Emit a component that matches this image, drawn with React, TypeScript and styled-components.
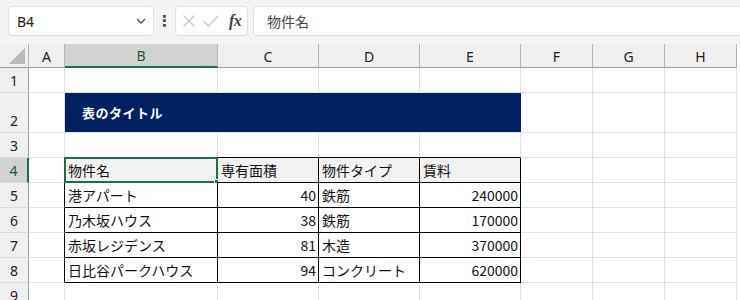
import { FC } from "react";
import styled, { createGlobalStyle } from "styled-components";

const GlobalStyle = createGlobalStyle`
    html, body {
        margin: 0;
        padding: 0;
        background: #ffffff;
        overflow: hidden;
    }
    * {
        box-sizing: border-box;
    }
`;

const GRID = "#e1e1e1";
const HEAD_LINE = "#b4b4b4";
const BLACK = "#000000";
const GREEN = "#1e6f45";
const NAVY = "#002060";

const columns = ["A", "B", "C", "D", "E", "F", "G", "H"];
const colWidths = [29, 36, 153, 101, 101, 101, 72, 72, 72];
const rowHeights = [24, 25, 40, 25, 25, 25, 25, 25, 25, 25];

type Row = { name: string; area: number; kind: string; rent: number };

const rows: Row[] = [
    { name: "港アパート", area: 40, kind: "鉄筋", rent: 240000 },
    { name: "乃木坂ハウス", area: 38, kind: "鉄筋", rent: 170000 },
    { name: "赤坂レジデンス", area: 81, kind: "木造", rent: 370000 },
    { name: "日比谷パークハウス", area: 94, kind: "コンクリート", rent: 620000 }
];

const ChevronDown: FC = () => (
    <svg width="12" height="12" viewBox="0 0 12 12" fill="none">
        <path d="M2.5 4.5 L6 8 L9.5 4.5" stroke="#444" strokeWidth="1.2" strokeLinecap="round" strokeLinejoin="round" />
    </svg>
);

const CrossIcon: FC = () => (
    <svg width="14" height="14" viewBox="0 0 14 14" fill="none">
        <path d="M1.5 1.5 L12.5 12.5 M12.5 1.5 L1.5 12.5" stroke="#c4c4c4" strokeWidth="1.1" />
    </svg>
);

const CheckIcon: FC = () => (
    <svg width="16" height="14" viewBox="0 0 16 14" fill="none">
        <path d="M1 7.5 L5.5 12 L15 2" stroke="#c4c4c4" strokeWidth="1.1" />
    </svg>
);

const DataRow: FC<{ row: Row; rowNo: number }> = ({ row, rowNo }) => (
    <>
        <RowHead>{rowNo}</RowHead>
        <Cell $right={BLACK} />
        <Cell $right={BLACK} $bottom={BLACK}>{row.name}</Cell>
        <Cell $right={BLACK} $bottom={BLACK} $align="right">{row.area}</Cell>
        <Cell $right={BLACK} $bottom={BLACK}>{row.kind}</Cell>
        <Cell $right={BLACK} $bottom={BLACK} $align="right">{row.rent}</Cell>
        <Cell />
        <Cell />
        <Cell />
    </>
);

export default function App() {
    return (
        <>
            <GlobalStyle />
            <Window>
                <FormulaBar>
                    <NameBox>
                        <span>B4</span>
                        <ChevronDown />
                    </NameBox>
                    <Dots>⋮</Dots>
                    <FxBox>
                        <CrossIcon />
                        <CheckIcon />
                        <FxLabel>fx</FxLabel>
                    </FxBox>
                    <FormulaInput>物件名</FormulaInput>
                </FormulaBar>

                <Sheet>
                    <Corner>
                        <CornerTriangle />
                    </Corner>
                    {columns.map((c) => (
                        <ColHead key={c} $selected={c === "B"}>{c}</ColHead>
                    ))}

                    <RowHead>1</RowHead>
                    {columns.map((c) => <Cell key={`1${c}`} />)}

                    <RowHead $bottomAlign>2</RowHead>
                    <Cell />
                    <TitleCell>表のタイトル</TitleCell>
                    <Cell />
                    <Cell />
                    <Cell />

                    <RowHead>3</RowHead>
                    <Cell />
                    <Cell $bottom={BLACK} />
                    <Cell $bottom={BLACK} />
                    <Cell $bottom={BLACK} />
                    <Cell $bottom={BLACK} />
                    <Cell />
                    <Cell />
                    <Cell />

                    <RowHead $selected>4</RowHead>
                    <Cell $right={BLACK} />
                    <Cell $right={BLACK} $bottom={BLACK} $head>
                        物件名
                        <Selection>
                            <FillHandle />
                        </Selection>
                    </Cell>
                    <Cell $right={BLACK} $bottom={BLACK} $head>専有面積</Cell>
                    <Cell $right={BLACK} $bottom={BLACK} $head>物件タイプ</Cell>
                    <Cell $right={BLACK} $bottom={BLACK} $head>賃料</Cell>
                    <Cell />
                    <Cell />
                    <Cell />

                    {rows.map((row, i) => (
                        <DataRow key={row.name} row={row} rowNo={i + 5} />
                    ))}

                    <RowHead>9</RowHead>
                    {columns.map((c) => <Cell key={`9${c}`} />)}
                </Sheet>
            </Window>
        </>
    );
}

const Window = styled.div`
    width: 740px;
    height: 300px;
    overflow: hidden;
    background: #ffffff;
    font-family: "Noto Sans CJK JP", "Noto Sans", sans-serif;
`;

const FormulaBar = styled.div`
    height: 44px;
    background: #f3f3f3;
    display: flex;
    align-items: flex-start;
    padding: 6px 0 0 8px;
`;

const NameBox = styled.div`
    width: 146px;
    height: 30px;
    background: #ffffff;
    border: 1px solid #e0e0e0;
    border-radius: 4px;
    display: flex;
    align-items: center;
    justify-content: space-between;
    padding: 0 6px 0 8px;
    font-family: "Noto Sans", "Open Sans", sans-serif;
    font-size: 14px;
    color: #222;
`;

const Dots = styled.div`
    width: 21px;
    height: 30px;
    display: flex;
    align-items: center;
    justify-content: center;
    font-size: 15px;
    font-weight: bold;
    color: #444;
    font-family: "DejaVu Sans", sans-serif;
`;

const FxBox = styled.div`
    width: 73px;
    height: 30px;
    background: #ffffff;
    border: 1px solid #e0e0e0;
    border-radius: 4px;
    display: flex;
    align-items: center;
    gap: 7px;
    padding: 0 0 0 6px;
`;

const FxLabel = styled.span`
    font-family: "Liberation Serif", serif;
    font-style: italic;
    font-weight: bold;
    font-size: 16px;
    color: #444;
    margin-left: 3px;
    letter-spacing: -0.5px;
`;

const FormulaInput = styled.div`
    flex: 1;
    height: 30px;
    margin-left: 5px;
    background: #ffffff;
    border: 1px solid #e0e0e0;
    border-right: none;
    border-radius: 4px 0 0 4px;
    display: flex;
    align-items: center;
    padding-left: 13px;
    font-size: 14px;
    color: #444;
`;

const Sheet = styled.div`
    display: grid;
    grid-template-columns: ${colWidths.map((w) => `${w}px`).join(" ")};
    grid-template-rows: ${rowHeights.map((h) => `${h}px`).join(" ")};
    font-size: 14px;
    color: #111;
`;

const Corner = styled.div`
    background: #efefef;
    border-right: 1px solid ${HEAD_LINE};
    border-bottom: 1px solid #9e9e9e;
    display: flex;
    align-items: flex-end;
    justify-content: flex-end;
    padding: 0 3px 3px 0;
`;

const CornerTriangle = styled.div`
    width: 0;
    height: 0;
    border-left: 16px solid transparent;
    border-bottom: 16px solid #b8b8b8;
`;

const ColHead = styled.div<{ $selected?: boolean }>`
    background: ${(p) => (p.$selected ? "#d2d2d2" : "#efefef")};
    border-right: 1px solid ${HEAD_LINE};
    border-bottom: ${(p) => (p.$selected ? `2px solid ${GREEN}` : "1px solid #9e9e9e")};
    display: flex;
    align-items: center;
    justify-content: center;
    font-family: "Noto Sans", "Open Sans", sans-serif;
    font-size: 14px;
    color: ${(p) => (p.$selected ? "#1d5a3a" : "#222")};
    padding-top: 1px;
`;

const RowHead = styled.div<{ $selected?: boolean; $bottomAlign?: boolean }>`
    background: ${(p) => (p.$selected ? "#d2d2d2" : "#efefef")};
    border-right: ${(p) => (p.$selected ? `2px solid ${GREEN}` : "1px solid #9e9e9e")};
    border-bottom: 1px solid #dadada;
    display: flex;
    align-items: ${(p) => (p.$bottomAlign ? "flex-end" : "center")};
    justify-content: center;
    padding-bottom: ${(p) => (p.$bottomAlign ? "2px" : "0")};
    font-family: "Noto Sans", "Open Sans", sans-serif;
    font-size: 14px;
    color: ${(p) => (p.$selected ? "#1d5a3a" : "#222")};
`;

const Cell = styled.div<{ $right?: string; $bottom?: string; $align?: "left" | "right"; $head?: boolean }>`
    position: relative;
    border-right: 1px solid ${(p) => p.$right ?? GRID};
    border-bottom: 1px solid ${(p) => p.$bottom ?? GRID};
    background: ${(p) => (p.$head ? "#f2f2f2" : "#ffffff")};
    display: flex;
    align-items: center;
    justify-content: ${(p) => (p.$align === "right" ? "flex-end" : "flex-start")};
    padding: 0 2px 1px 3px;
    white-space: nowrap;
    font-size: 14px;
    color: #111;
`;

const TitleCell = styled.div`
    grid-column: span 4;
    background: ${NAVY};
    border-bottom: 1px solid ${GRID};
    display: flex;
    align-items: center;
    padding-left: 17px;
    font-size: 13px;
    font-weight: bold;
    color: #ffffff;
    letter-spacing: 0.5px;
`;

const Selection = styled.div`
    position: absolute;
    left: -1px;
    top: -1px;
    right: -1px;
    bottom: -1px;
    border: 2px solid ${GREEN};
    pointer-events: none;
`;

const FillHandle = styled.div`
    position: absolute;
    right: -5px;
    bottom: -5px;
    width: 7px;
    height: 7px;
    background: ${GREEN};
    border: 1px solid #ffffff;
`;
